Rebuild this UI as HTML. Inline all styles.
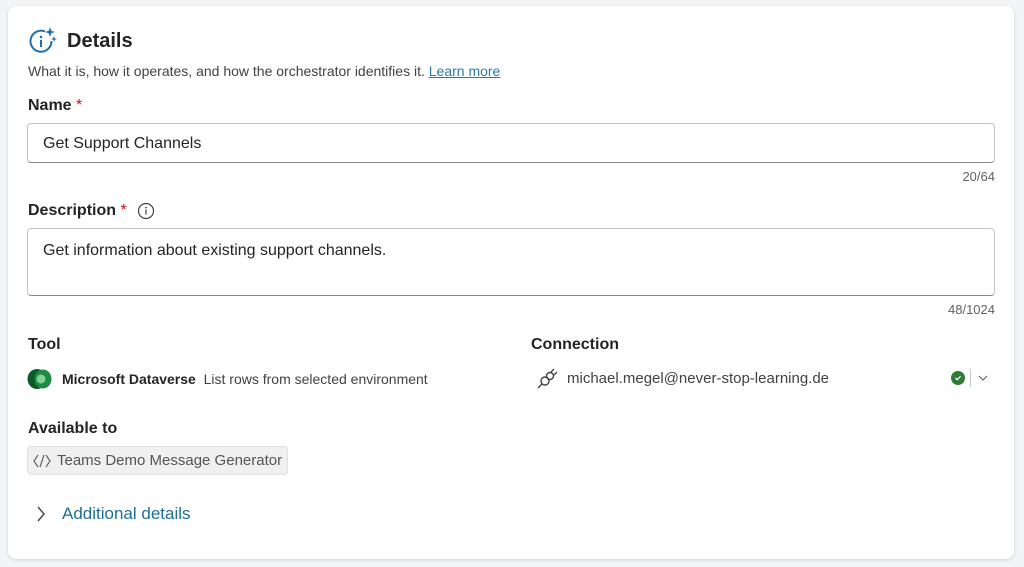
<!DOCTYPE html>
<html><head><style>
body{margin:0;width:1024px;height:567px;background:#f3f4f6;font-family:"Liberation Sans",sans-serif;color:#242424;position:relative;overflow:hidden}
.card{position:absolute;left:8px;top:6px;width:1006px;height:553px;background:#fff;border-radius:8px;box-shadow:0 1px 3px rgba(0,0,0,.15)}
.a{position:absolute;white-space:nowrap}
.lbl{font-size:16px;font-weight:bold;color:#242424}
.star{color:#c50f1f;font-weight:normal}
.inp{position:absolute;left:27px;width:968px;border:1px solid #c4c4c4;border-bottom-color:#8a8a8a;border-radius:4px;box-sizing:border-box;font-size:16px;padding:0 15px}
.cnt{font-size:13px;color:#616161}
</style></head><body>
<div class="card"></div>
<svg class="a" style="left:28px;top:27px" width="30" height="28" viewBox="0 0 30 28"><path d="M17 4.5A10.5 10.5 0 1 0 23.5 14" fill="none" stroke="#1f6fad" stroke-width="2"/><circle cx="13" cy="10" r="1.3" fill="#1f6fad"/><rect x="12" y="13" width="2" height="7" fill="#1f6fad"/><path d="M22 0l1.3 3.7 3.7 1.3-3.7 1.3L22 10l-1.3-3.7L17 5l3.7-1.3z" fill="#1f6fad"/><path d="M26 9l.8 2.2 2.2.8-2.2.8L26 15l-.8-2.2L23 12l2.2-.8z" fill="#1f6fad"/></svg>
<div class="a" style="left:67px;top:30px;font-size:20px;font-weight:bold">Details</div>
<div class="a" style="left:28px;top:63px;font-size:14px;color:#424242">What it is, how it operates, and how the orchestrator identifies it. <span style="text-decoration:underline;color:#2a7aa8">Learn more</span></div>
<div class="a lbl" style="left:28px;top:97px">Name <span class="star">*</span></div>
<div class="inp" style="top:123px;height:40px;line-height:40px">Get Support Channels</div>
<div class="a cnt" style="right:29px;top:169px">20/64</div>
<div class="a lbl" style="left:28px;top:202px">Description <span class="star">*</span></div>
<svg class="a" style="left:137px;top:202px" width="18" height="18" viewBox="0 0 18 18"><circle cx="9" cy="9" r="7.5" fill="none" stroke="#424242" stroke-width="1.2"/><circle cx="9" cy="5.6" r=".9" fill="#424242"/><rect x="8.4" y="7.5" width="1.2" height="5" fill="#424242"/></svg>
<div class="inp" style="top:228px;height:68px;line-height:44px">Get information about existing support channels.</div>
<div class="a cnt" style="right:29px;top:302px">48/1024</div>
<div class="a lbl" style="left:28px;top:336px">Tool</div>
<svg class="a" style="left:27px;top:368px" width="26" height="22" viewBox="0 0 26 22"><ellipse cx="10" cy="11" rx="9.5" ry="10" fill="#0b5a2a"/><ellipse cx="16" cy="11" rx="8.5" ry="9.5" fill="#1f8a45"/><ellipse cx="14" cy="11" rx="4.5" ry="4.5" fill="#7fd28f"/></svg>
<div class="a" style="left:62px;top:371px;font-size:14px"><b>Microsoft Dataverse</b>&nbsp; <span style="color:#424242">List rows from selected environment</span></div>
<div class="a lbl" style="left:531px;top:336px">Connection</div>
<svg class="a" style="left:536px;top:368px" width="22" height="22" viewBox="0 0 22 22" fill="none" stroke="#424242" stroke-width="1.4"><path d="M2 20l4-4"/><circle cx="9" cy="13" r="4"/><circle cx="14" cy="8" r="3.5"/><path d="M15 4l3-3M18 7l3-3"/></svg>
<div class="a" style="left:567px;top:370px;font-size:15px;color:#424242">michael.megel@never-stop-learning.de</div>
<div class="a" style="left:951px;top:371px;width:14px;height:14px;border-radius:50%;background:#2e7d32"></div>
<svg class="a" style="left:954px;top:374px" width="8" height="8" viewBox="0 0 8 8"><path d="M1.5 4l1.7 1.7L6.5 2.3" fill="none" stroke="#fff" stroke-width="1.3"/></svg>
<div class="a" style="left:970px;top:369px;width:1px;height:18px;background:#c4c4c4"></div>
<svg class="a" style="left:978px;top:375px" width="10" height="6" viewBox="0 0 10 6"><path d="M1 1l4 4 4-4" fill="none" stroke="#616161" stroke-width="1.1"/></svg>
<div class="a lbl" style="left:28px;top:420px">Available to</div>
<div class="a" style="left:27px;top:446px;width:261px;height:29px;background:#f0f0f0;border:1px solid #e0e0e0;border-radius:4px;box-sizing:border-box"></div>
<svg class="a" style="left:33px;top:453px" width="18" height="16" viewBox="0 0 18 16" fill="none" stroke="#616161" stroke-width="1.2"><path d="M5 2L1 8l4 6M13 2l4 6-4 6M11 2L7 14"/></svg>
<div class="a" style="left:57px;top:452px;font-size:15px;color:#555">Teams Demo Message Generator</div>
<svg class="a" style="left:36px;top:506px" width="10" height="16" viewBox="0 0 10 16"><path d="M2 1l6 7-6 7" fill="none" stroke="#424242" stroke-width="1.4"/></svg>
<div class="a" style="left:62px;top:504px;font-size:17px;color:#1f6f94">Additional details</div>
</body></html>
